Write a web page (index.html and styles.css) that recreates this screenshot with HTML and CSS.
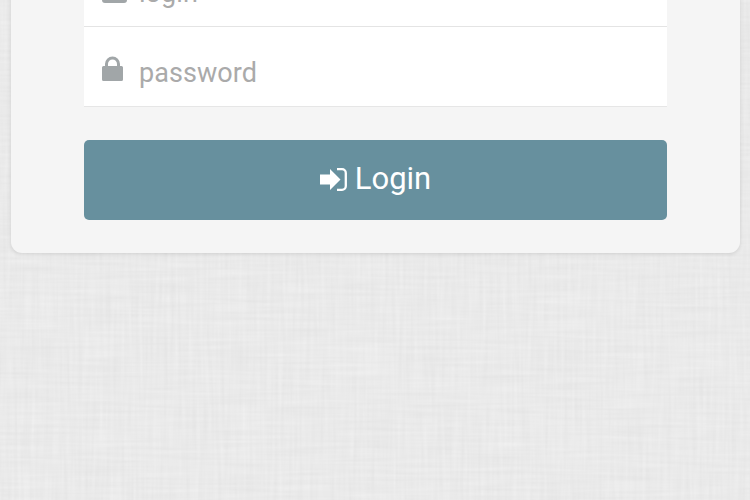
FILE: index.html
```html
<!DOCTYPE html>
<html lang="en">
<head>
<meta charset="utf-8">
<title>Login</title>
<link rel="stylesheet" href="styles.css">
</head>
<body>
<main class="card">
  <form class="form">
    <div class="fields">
      <label class="field">
        <svg class="field-icon field-icon-user" viewBox="0 0 25 25" aria-hidden="true"><circle cx="12.500" cy="7" r="7"/><path d="M0 21c0-5 3-9 7-9.500 3.500 2.500 7.500 2.500 11 0 4 .5 7 4.500 7 9.500v1a3 3 0 0 1-3 3H3a3 3 0 0 1-3-3z"/></svg>
        <span class="placeholder">login</span>
      </label>
      <label class="field">
        <svg class="field-icon" viewBox="0 0 21 25" aria-hidden="true"><path fill-rule="evenodd" d="M3 10V8a7.500 7.500 0 0 1 15 0v2h1.500A1.500 1.500 0 0 1 21 11.500v12a1.500 1.500 0 0 1-1.500 1.500H1.500A1.500 1.500 0 0 1 0 23.500v-12A1.500 1.500 0 0 1 1.500 10zM6 10h9V8a4.500 4.500 0 0 0-9 0z"/></svg>
        <span class="placeholder">password</span>
      </label>
    </div>
    <button class="submit" type="button">
      <svg class="submit-icon" viewBox="0 0 27 23" aria-hidden="true"><path d="M0 6.500h10V1l10.500 10.500L10 22v-5.500H0z"/><path class="submit-icon-door" d="M17 1.200h5a3.800 3.800 0 0 1 3.800 3.800v13a3.800 3.800 0 0 1-3.800 3.800h-5"/></svg>
      <span>Login</span>
    </button>
  </form>
</main>
</body>
</html>
```
FILE: styles.css
```css
html, body {
  margin: 0;
  height: 500px;
  overflow: hidden;
}

body {
  font-family: Roboto, "Liberation Sans", sans-serif;
  background-color: #e9e9e9;
  background-image: url("data:image/svg+xml,%3Csvg xmlns='http://www.w3.org/2000/svg' width='750' height='500'%3E%3Cfilter id='n' x='0' y='0' width='100%25' height='100%25' color-interpolation-filters='sRGB'%3E%3CfeTurbulence type='fractalNoise' baseFrequency='0.015 0.28' numOctaves='2' seed='3' result='a'/%3E%3CfeTurbulence type='fractalNoise' baseFrequency='0.28 0.015' numOctaves='2' seed='8' result='b'/%3E%3CfeComposite in='a' in2='b' operator='arithmetic' k2='0.5' k3='0.5'/%3E%3CfeColorMatrix values='0.07 0 0 0 0.882 0.07 0 0 0 0.882 0.07 0 0 0 0.882 0 0 0 0 1'/%3E%3C/filter%3E%3Crect width='750' height='500' filter='url(%23n)'/%3E%3C/svg%3E");
}

.card {
  box-sizing: border-box;
  width: 729px;
  margin: -86px 0 0 11px;
  padding: 33px 73px;
  background: #f5f5f5;
  border-radius: 0 0 11px 11px;
  box-shadow: 0 1px 4px rgba(0,0,0,.12);
}

.fields {
  background: #fff;
  box-shadow: 0 1px 0 #e6e6e6;
}

.field {
  display: flex;
  align-items: center;
  gap: 16px;
  height: 80px;
  padding: 12px 0 0 18px;
  box-sizing: border-box;
  border-bottom: 1px solid #e4e4e4;
}

.field:last-child {
  height: 79px;
  border-bottom: 0;
}

.field-icon {
  width: 21px;
  height: 25px;
  margin-bottom: 8px;
  flex: none;
  fill: #a1a6a8;
}

.field-icon-user {
  width: 25px;
  margin-bottom: 4px;
  margin-right: -4px;
}

.placeholder {
  font-size: 27px;
  line-height: 32px;
  letter-spacing: .05px;
  color: #aaa;
}

.submit {
  display: flex;
  align-items: center;
  justify-content: center;
  gap: 8px;
  width: 100%;
  height: 80px;
  margin-top: 34px;
  padding: 0 0 2px;
  border: 0;
  border-radius: 5px;
  background: #67909e;
  color: #fff;
  font: 400 31px/38px Roboto, "Liberation Sans", sans-serif;
}

.submit-icon {
  width: 27px;
  height: 23px;
  fill: #fff;
}

.submit-icon-door {
  fill: none;
  stroke: #fff;
  stroke-width: 2.300;
}
```
